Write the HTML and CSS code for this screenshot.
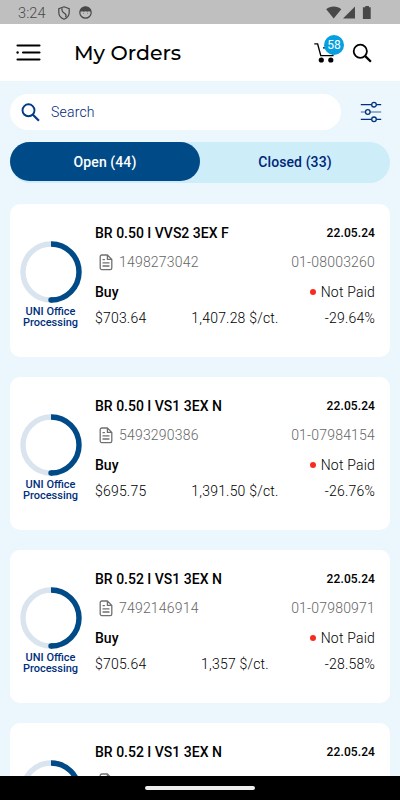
FILE: index.html
```
<!DOCTYPE html>
<html lang="en">
<head>
  <meta charset="UTF-8" />
  <meta name="viewport" content="width=device-width, initial-scale=1.0" />
  <title>My Orders</title>
  <link rel="stylesheet" href="styles.css">
</head>
<body>

  <!-- Shared icons -->
  <svg class="sprite">
    <symbol id="ring" viewBox="0 0 62 62">
      <circle cx="31" cy="31" r="28" fill="none" stroke="#d9e4ee" stroke-width="5.4" />
      <path d="M31 3a28 28 0 0 1 0 56" fill="none" stroke="#004b87" stroke-width="5.4" />
      <circle cx="31" cy="59" r="2.7" fill="#004b87" />
    </symbol>
    <symbol id="doc" viewBox="0 0 14 17">
      <path d="M8.400 1H2.800A1.600 1.600 0 0 0 1.200 2.600V14a1.600 1.600 0 0 0 1.600 1.600h8.400A1.600 1.600 0 0 0 12.800 14V5.400zM8.400 1.200v4.200h4.200M4 5.600h1.500M4 8.900h6M4 12h6" fill="none" stroke="#707070" stroke-width="1.3" stroke-linejoin="round" stroke-linecap="round" />
    </symbol>
  </svg>

  <!-- Status bar -->
  <div class="status-bar">
    <span class="time">3:24</span>
    <svg class="shield" width="12" height="14" viewBox="0 0 12 14">
      <path d="M6 .8 11.200 2.600V6.500c0 3-2.200 5.500-5.200 6.700C3 12 .8 9.500.8 6.500V2.600z" fill="none" stroke="#484848" stroke-width="1.2" />
      <path d="M4.200 2.300c-1.200 3 .8 4 2.600 5.200 1.400 1 1.600 2.400.8 3.800" fill="none" stroke="#484848" stroke-width="1.200" />
    </svg>
    <svg class="face" width="13" height="13" viewBox="0 0 13 13">
      <circle cx="6.500" cy="6.500" r="5.700" fill="none" stroke="#484848" stroke-width="1.200" />
      <path d="M1.200 6C1.500 2 4 .8 6.500.8s5 1.200 5.300 5.200L10 5.200 8.300 5.700 6.500 5.200 4.700 5.700 3 5.200z" fill="#484848" />
      <path d="M4 7.300h1M8 7.300h1" stroke="#777" stroke-width=".8" />
    </svg>
    <svg class="signals" width="46" height="14" viewBox="0 0 46 14">
      <path d="M.2 3.200C4.300-.3 11.200-.3 15.300 3.200L7.700 12.600z" fill="#484848" />
      <path d="M29 .5V12.500H17z" fill="#484848" />
      <path d="M39.300 0h3.600v1.300h1.800V13h-7.800V1.300h2.400z" fill="#484848" />
    </svg>
  </div>

  <!-- Header -->
  <header class="app-header">
    <svg width="26" height="19" viewBox="0 0 26 19">
      <path d="M1.500 2.500h22M7 9.500h16.500M1.500 16.500h22" stroke="#000" stroke-width="2.100" stroke-linecap="round" />
      <circle cx="1.600" cy="9.500" r="1.200" />
    </svg>
    <h1>My Orders</h1>
    <div class="cart">
      <svg width="22" height="22" viewBox="0 0 22 22">
        <path d="M.3 1.900h3.300L6.800 13.600h12.800M9 5.900h3" fill="none" stroke="#000" stroke-width="1.400" />
        <path d="M19.500 8l-1 4.500" stroke="#000" stroke-width="1.200" />
        <circle cx="7.300" cy="18" r="2.600" />
        <circle cx="16.800" cy="18" r="2.600" />
      </svg>
      <span class="badge">58</span>
    </div>
    <svg width="20" height="20" viewBox="0 0 20 20">
      <circle cx="8.300" cy="8.200" r="6.600" fill="none" stroke="#000" stroke-width="1.800" />
      <path d="M13 12.900l5.900 5.900" stroke="#000" stroke-width="2.300" />
    </svg>
  </header>

  <!-- Search and filter -->
  <div class="search-row">
    <div class="search-box">
      <svg width="19" height="19" viewBox="0 0 19 19">
        <circle cx="7.500" cy="7.300" r="6" fill="none" stroke="#003a80" stroke-width="1.900" />
        <path d="M11.700 11.500l6.200 6.200" stroke="#003a80" stroke-width="2.200" />
      </svg>
      <span>Search</span>
    </div>
    <svg class="filter" width="22" height="22" viewBox="0 0 22 22">
      <path d="M.8 3.700h20.400M.8 18.300h20.400" stroke="#00317d" stroke-width="1.200" />
      <path d="M.8 11h20.400" stroke="#5d7fa9" stroke-width="1.200" />
      <g fill="#ebf7fc" stroke="#00317d" stroke-width="1.300">
        <circle cx="14" cy="3.700" r="2.300" />
        <circle cx="7.800" cy="11" r="2.300" />
        <circle cx="14" cy="18.300" r="2.300" />
      </g>
    </svg>
  </div>

  <!-- Tabs -->
  <div class="tabs">
    <div class="tab active">Open (44)</div>
    <div class="tab">Closed (33)</div>
  </div>

  <!-- Orders -->
  <main class="orders">
    <div class="card">
      <div class="progress">
        <svg width="62" height="62"><use href="#ring" /></svg>
        <p>UNI Office<br>Processing</p>
      </div>
      <div class="details">
        <div class="row name"><strong>BR 0.50 I VVS2 3EX F</strong><span class="date">22.05.24</span></div>
        <div class="row numbers"><svg width="14" height="17"><use href="#doc" /></svg><span>1498273042</span><span class="right">01-08003260</span></div>
        <div class="row type"><strong>Buy</strong><span class="paid">Not Paid</span></div>
        <div class="row price"><span>$703.64</span><span>1,407.28 $/ct.</span><span>-29.64%</span></div>
      </div>
    </div>

    <div class="card">
      <div class="progress">
        <svg width="62" height="62"><use href="#ring" /></svg>
        <p>UNI Office<br>Processing</p>
      </div>
      <div class="details">
        <div class="row name"><strong>BR 0.50 I VS1 3EX N</strong><span class="date">22.05.24</span></div>
        <div class="row numbers"><svg width="14" height="17"><use href="#doc" /></svg><span>5493290386</span><span class="right">01-07984154</span></div>
        <div class="row type"><strong>Buy</strong><span class="paid">Not Paid</span></div>
        <div class="row price"><span>$695.75</span><span>1,391.50 $/ct.</span><span>-26.76%</span></div>
      </div>
    </div>

    <div class="card">
      <div class="progress">
        <svg width="62" height="62"><use href="#ring" /></svg>
        <p>UNI Office<br>Processing</p>
      </div>
      <div class="details">
        <div class="row name"><strong>BR 0.52 I VS1 3EX N</strong><span class="date">22.05.24</span></div>
        <div class="row numbers"><svg width="14" height="17"><use href="#doc" /></svg><span>7492146914</span><span class="right">01-07980971</span></div>
        <div class="row type"><strong>Buy</strong><span class="paid">Not Paid</span></div>
        <div class="row price"><span>$705.64</span><span>1,357 $/ct.</span><span>-28.58%</span></div>
      </div>
    </div>

    <div class="card">
      <div class="progress">
        <svg width="62" height="62"><use href="#ring" /></svg>
      </div>
      <div class="details">
        <div class="row name"><strong>BR 0.52 I VS1 3EX N</strong><span class="date">22.05.24</span></div>
        <div class="row numbers"><svg width="14" height="17"><use href="#doc" /></svg></div>
      </div>
    </div>
  </main>

  <!-- Navigation bar -->
  <div class="nav-bar"><div class="handle"></div></div>

</body>
</html>
```
FILE: styles.css
```
* {
  box-sizing: border-box;
}
body {
  margin: 0;
  height: 100vh;
  display: flex;
  flex-direction: column;
  overflow: hidden;
  background: #ebf7fc;
  font-family: Roboto, sans-serif;
  font-size: 14px;
  color: #000;
}
svg {
  display: block;
  flex-shrink: 0;
}
.sprite {
  display: none;
}
.status-bar {
  flex: 0 0 24px;
  display: flex;
  align-items: center;
  padding: 1px 28px 0 18px;
  background: #bfbfbf;
  color: #484848;
}
.time {
  width: 40px;
  padding-top: 1px;
  font-size: 14.5px;
  font-weight: 300;
  letter-spacing: 0.1px;
}
.face {
  margin-left: 9px;
}
.signals {
  margin-left: auto;
}
.app-header {
  flex: 0 0 57px;
  display: flex;
  align-items: center;
  padding: 0 28px 0 16px;
  background: #fff;
}
.app-header h1 {
  margin: 0 auto 0 32px;
  font-family: Montserrat, Inter, sans-serif;
  font-size: 20.5px;
  font-weight: 500;
}
.cart {
  position: relative;
  margin-right: 16px;
}
.badge {
  position: absolute;
  left: 10px;
  top: -7px;
  width: 20px;
  height: 20px;
  border-radius: 50%;
  background: #069fe0;
  color: #fff;
  font-size: 12px;
  line-height: 20px;
  text-align: center;
}
.search-row {
  display: flex;
  align-items: center;
  padding: 13px 18px 0 10px;
}
.search-box {
  width: 331px;
  height: 36px;
  display: flex;
  align-items: center;
  gap: 11px;
  padding-left: 11px;
  border-radius: 18px;
  background: #fff;
  color: #00267a;
  font-weight: 350;
  letter-spacing: 0.2px;
}
.filter {
  margin-left: auto;
}
.tabs {
  flex: 0 0 41px;
  display: flex;
  margin: 12px 10px 0;
  border-radius: 21px;
  background: #cdedf8;
}
.tab {
  width: 190px;
  height: 39px;
  border-radius: 20px;
  line-height: 41px;
  text-align: center;
  font-weight: 500;
  letter-spacing: 0.1px;
  color: #00267a;
}
.tab.active {
  background: #004b87;
  color: #fff;
}
.orders {
  flex: 1;
  min-height: 0;
  overflow: hidden;
  display: flex;
  flex-direction: column;
  gap: 20px;
  padding: 21px 10px 0;
}
.card {
  flex: 0 0 153px;
  display: flex;
  padding: 0 15px 0 10px;
  border-radius: 10px;
  background: #fff;
}
.progress {
  width: 62px;
  padding-top: 37px;
}
.progress p {
  margin: 3px 0 0 -1px;
  font-size: 11px;
  line-height: 11px;
  text-align: center;
  font-weight: 500;
  color: #00307c;
}
.details {
  flex: 1;
  margin-left: 13px;
  padding-top: 19px;
  font-weight: 350;
  letter-spacing: 0.2px;
}
.row {
  display: flex;
  align-items: center;
  justify-content: space-between;
  height: 20px;
}
.row strong {
  font-weight: 500;
  letter-spacing: 0;
}
.date {
  font-size: 12px;
  font-weight: 500;
  letter-spacing: 0.1px;
}
.numbers {
  height: 38px;
  padding-left: 4px;
  gap: 6px;
  color: #666;
}
.numbers .right {
  margin-left: auto;
}
.type {
  height: 22px;
}
.paid::before {
  content: "";
  display: inline-block;
  width: 6px;
  height: 6px;
  margin-right: 5px;
  border-radius: 50%;
  background: #f92b20;
  vertical-align: 2px;
}
.price {
  display: grid;
  grid-template-columns: 1fr 1fr 1fr;
  height: 29px;
}
.price span:nth-child(2) {
  text-align: center;
}
.price span:last-child {
  text-align: right;
}
.nav-bar {
  flex: 0 0 24px;
  display: flex;
  justify-content: center;
  align-items: center;
  background: #000;
}
.handle {
  width: 110px;
  height: 4px;
  border-radius: 2px;
  background: #eee;
}
```
